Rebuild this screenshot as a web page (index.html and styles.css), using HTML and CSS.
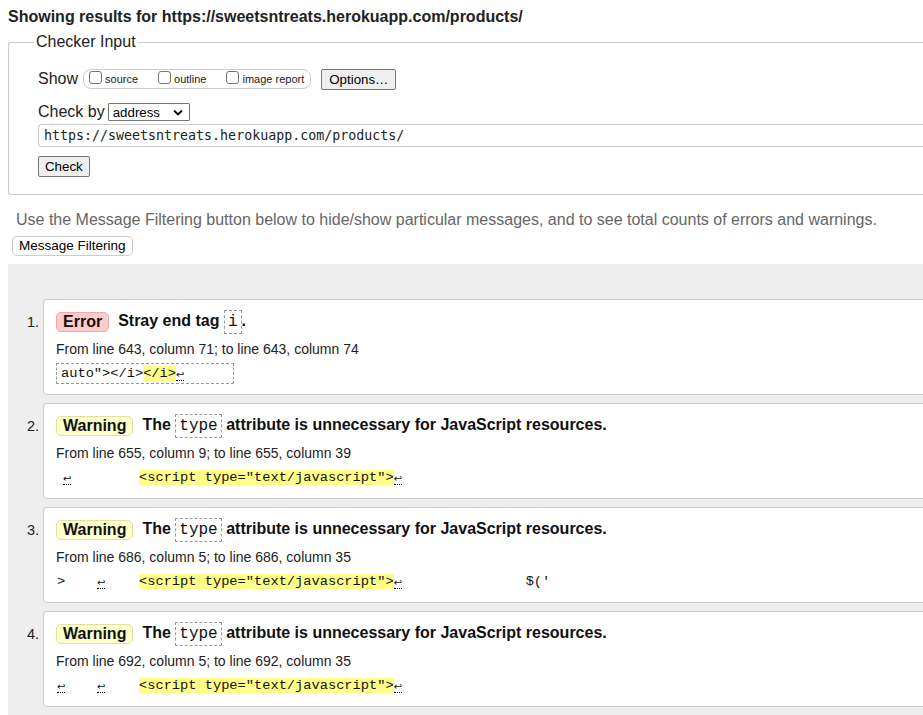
FILE: index.html
```html
<!DOCTYPE html>
<html>
<head>
<meta charset="utf-8">
<title>Nu Html Checker</title>
<link rel="stylesheet" href="styles.css">
</head>
<body>
<div class="page">
  <h2 class="title">Showing results for https://sweetsntreats.herokuapp.com/products/</h2>
  <fieldset class="checker">
    <legend class="legend">Checker Input</legend>
    <div class="row show-row">
      <span class="row-label">Show</span>
      <span class="opts">
        <label class="opt"><span class="cb"></span>source</label>
        <label class="opt"><span class="cb"></span>outline</label>
        <label class="opt"><span class="cb"></span>image report</label>
      </span>
      <button class="btn btn-options">Options…</button>
    </div>
    <div class="row by-row">
      <span class="row-label">Check by</span>
      <span class="select">address<svg class="chev" width="10" height="7" viewBox="0 0 10 7"><path d="M1 1.5 L5 5.5 L9 1.5" fill="none" stroke="#000" stroke-width="1.8"/></svg></span>
    </div>
    <div class="url">https://sweetsntreats.herokuapp.com/products/</div>
    <button class="btn btn-check">Check</button>
  </fieldset>
  <p class="hint">Use the Message Filtering button below to hide/show particular messages, and to see total counts of errors and warnings.</p>
  <button class="btn-filter">Message Filtering</button>
  <div class="results">
    <ol class="msgs">
      <li class="msg">
        <p class="msg-head"><span class="badge badge-error">Error</span><span class="msg-text">Stray end tag <code class="c">i</code>.</span></p>
        <p class="loc">From line 643, column 71; to line 643, column 74</p>
        <p class="extract boxed"><span class="x">auto"&gt;&lt;/i&gt;<b class="hl">&lt;/i&gt;</b><span class="lf">↩</span></span></p>
      </li>
      <li class="msg">
        <p class="msg-head"><span class="badge badge-warn">Warning</span><span class="msg-text">The <code class="c">type</code> attribute is unnecessary for JavaScript resources.</span></p>
        <p class="loc">From line 655, column 9; to line 655, column 39</p>
        <p class="extract"><span class="x"><span class="sp1"></span><span class="lf">↩</span><span class="sp2"></span><b class="hl">&lt;script type="text/javascript"&gt;</b><span class="lf">↩</span></span></p>
      </li>
      <li class="msg">
        <p class="msg-head"><span class="badge badge-warn">Warning</span><span class="msg-text">The <code class="c">type</code> attribute is unnecessary for JavaScript resources.</span></p>
        <p class="loc">From line 686, column 5; to line 686, column 35</p>
        <p class="extract"><span class="x"><span class="gt">&gt;</span><span class="lf">↩</span><span class="sp3"></span><b class="hl">&lt;script type="text/javascript"&gt;</b><span class="lf">↩</span><span class="sp4"></span>$('</span></p>
      </li>
      <li class="msg">
        <p class="msg-head"><span class="badge badge-warn">Warning</span><span class="msg-text">The <code class="c">type</code> attribute is unnecessary for JavaScript resources.</span></p>
        <p class="loc">From line 692, column 5; to line 692, column 35</p>
        <p class="extract"><span class="x"><span class="lf">↩</span><span class="sp5"></span><span class="lf">↩</span><span class="sp3"></span><b class="hl">&lt;script type="text/javascript"&gt;</b><span class="lf">↩</span></span></p>
      </li>
    </ol>
  </div>
</div>
</body>
</html>
```

FILE: styles.css
```css
body {
  margin: 8px 0 0 8px;
  font-family: "Liberation Sans", Arial, sans-serif;
  color: #000;
  background: #fff;
  overflow: hidden;
}
.title {
  font-size: 16px;
  font-weight: bold;
  margin: 0;
  line-height: 18px;
  color: #222;
}
.checker {
  margin: 7px 0 0 0;
  border: 1px solid #ccc;
  border-right: none;
  border-radius: 3px 0 0 3px;
  padding: 6px 0 17px 29px;
  min-width: 0;
}
.legend {
  font-size: 16px;
  padding: 0 2px;
  margin-left: -4px;
  color: #222;
}
.row {
  display: flex;
  align-items: center;
}
.row-label {
  font-size: 16px;
  color: #222;
}
.show-row {
  height: 22px;
  margin-top: 11px;
}
.opts {
  display: flex;
  align-items: center;
  margin-left: 5px;
  height: 18px;
  padding: 0 6px 0 5px;
  border: 1px solid #ccc;
  border-radius: 8px;
}
.opt {
  display: flex;
  align-items: center;
  font-size: 11px;
  color: #222;
  margin-right: 20px;
}
.opt:last-child {
  margin-right: 0;
}
.cb {
  display: inline-block;
  width: 11px;
  height: 11px;
  border: 1px solid #767676;
  border-radius: 3px;
  margin-right: 3px;
  margin-top: -3px;
  background: #fff;
}
.btn {
  font-family: "Liberation Sans", Arial, sans-serif;
  font-size: 13.3px;
  color: #000;
  background: #efefef;
  border: 1px solid #767676;
  border-radius: 2px;
  padding: 0 6px;
  height: 21px;
  line-height: 19px;
}
.btn-options {
  margin-left: 10px;
  padding: 0 7px;
}
.by-row {
  margin-top: 12px;
  height: 20px;
}
.select {
  display: flex;
  align-items: center;
  justify-content: space-between;
  box-sizing: border-box;
  margin-left: 3px;
  width: 82px;
  height: 18px;
  border: 1px solid #767676;
  border-radius: 1px;
  font-size: 13.3px;
  padding: 0 6px 0 4px;
  color: #000;
}
.url {
  margin-top: 2px;
  height: 21px;
  line-height: 21px;
  border: 1px solid #ccc;
  border-right: none;
  border-radius: 4px 0 0 4px;
  padding: 0 5px;
  font-family: "DejaVu Sans Mono", monospace;
  font-size: 13.3px;
  color: #222;
}
.btn-check {
  display: block;
  margin-top: 9px;
  padding: 0 6px;
}
.hint {
  margin: 15px 0 0 8px;
  font-size: 16px;
  line-height: 20px;
  color: #666;
  white-space: nowrap;
}
.btn-filter {
  display: block;
  margin: 6px 0 0 4px;
  font-family: "Liberation Sans", Arial, sans-serif;
  font-size: 13.5px;
  height: 20px;
  line-height: 18px;
  padding: 0 6px;
  background: #fff;
  border: 1px solid #ccc;
  border-radius: 5px;
  color: #000;
}
.results {
  margin-top: 8px;
  background: #eee;
  padding: 35px 0 20px 35px;
}
.msgs {
  margin: 0;
  padding: 0;
  list-style: decimal;
}
.msg {
  background: #fff;
  border: 1px solid #ccc;
  border-right: none;
  border-radius: 4px 0 0 4px;
  padding: 11px 0 10px 12px;
  margin-bottom: 8px;
  font-size: 14px;
  color: #222;
  white-space: nowrap;
}
.msg::marker {
  font-size: 14.5px;
}
.msg p {
  margin: 0;
}
.msg-head {
  display: flex;
  align-items: center;
  height: 22px;
}
.badge {
  display: inline-block;
  font-size: 16px;
  font-weight: bold;
  height: 18px;
  line-height: 18px;
  padding: 0 6px;
  border-radius: 5px;
  color: #111;
}
.badge-error {
  background: #fcc;
  border: 1px solid #f0a8a8;
}
.badge-warn {
  background: #ffc;
  border: 1px solid #e0e0a0;
}
.msg-text {
  margin-left: 9px;
  font-size: 16px;
  font-weight: bold;
  line-height: 18px;
  color: #111;
}
.c {
  display: inline-block;
  font-family: "Liberation Mono", "Courier New", monospace;
  font-weight: normal;
  font-size: 16px;
  line-height: 22px;
  padding: 0 3px;
  border: 1px dashed #999;
  vertical-align: baseline;
}
.loc {
  margin-top: 7px !important;
  height: 18px;
  line-height: 18px;
}
.extract {
  margin-top: 5px !important;
  height: 21px;
}
.x {
  display: inline-block;
  box-sizing: border-box;
  height: 21px;
  line-height: 19px;
  padding: 0;
  border: 1px dashed transparent;
  font-family: "Liberation Mono", "Courier New", monospace;
  font-size: 13.7px;
  white-space: pre;
  color: #111;
}
.boxed .x {
  border-color: #999;
  width: 178px;
  padding-left: 4px;
}
.hl {
  font-weight: normal;
  background: #ff8;
}
.lf {
  display: inline-block;
  width: 8px;
  font-family: "DejaVu Sans", sans-serif;
  font-size: 10px;
  line-height: 10px;
  border-bottom: 1px dotted #000;
  vertical-align: -1px;
}
.sp1 { display: inline-block; width: 6px; }
.sp2 { display: inline-block; width: 68px; }
.sp3 { display: inline-block; width: 34px; }
.sp4 { display: inline-block; width: 124px; }
.sp5 { display: inline-block; width: 32px; }
.gt { display: inline-block; width: 40px; }
```
